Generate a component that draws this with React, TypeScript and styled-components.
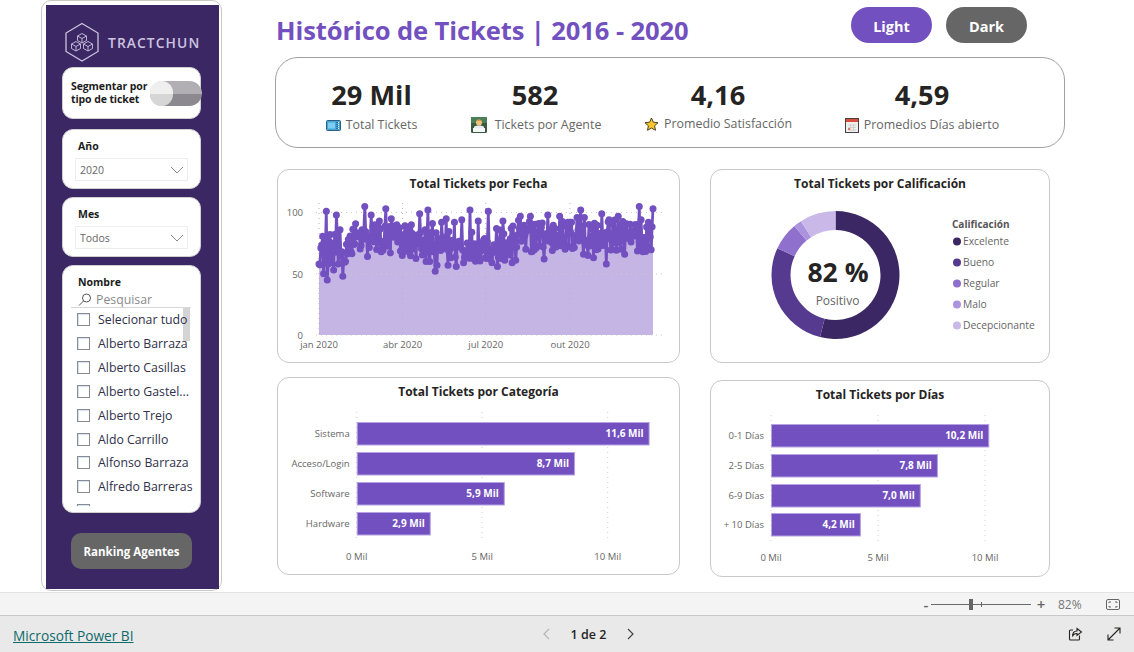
import React from "react";
import styled, { createGlobalStyle } from "styled-components";

const Global = createGlobalStyle`
  html, body { margin: 0; padding: 0; background: #fff; overflow: hidden; }
  body { font-family: "Open Sans", "Noto Sans", "Liberation Sans", sans-serif; }
  * { box-sizing: border-box; }
`;

const Page = styled.div`
  width: 1134px;
  height: 652px;
  display: flex;
  flex-direction: column;
`;
const Canvas = styled.div`
  height: 592px;
  display: flex;
  padding-left: 41px;
  background: #fff;
`;
const SideFrame = styled.aside`
  width: 181px;
  height: 591px;
  border: 1px solid #c8c8c8;
  border-radius: 10px;
  padding: 4px 2px 0 4px;
  background: #fff;
`;
const SideInner = styled.div`
  height: 584px;
  background: #3b2763;
  padding: 17px 18px 0 16px;
  display: flex;
  flex-direction: column;
`;
const Logo = styled.div`
  display: flex;
  align-items: center;
  gap: 8px;
  height: 39px;
  margin-left: 2px;
  margin-bottom: 6px;
`;
const LogoText = styled.span`
  color: #cdc3e0;
  font-size: 13.8px;
  font-weight: 600;
  letter-spacing: 1.1px;
  white-space: nowrap;
  margin-top: 1px;
`;
const SideCard = styled.div<{ $h: number; $mb: number }>`
  height: ${(p) => p.$h}px;
  margin-bottom: ${(p) => p.$mb}px;
  width: 139px;
  background: #fff;
  border: 1px solid #cfcfcf;
  border-radius: 11px;
  overflow: hidden;
`;
const ToggleCard = styled(SideCard)`
  display: flex;
  align-items: center;
  padding-left: 8px;
  overflow: visible;
  position: relative;
`;
const ToggleLabel = styled.div`
  font-size: 10.5px;
  font-weight: 700;
  line-height: 13.5px;
  color: #1c1c1c;
  white-space: nowrap;
  letter-spacing: -0.1px;
`;
const Toggle = styled.div`
  position: absolute;
  left: 87px;
  top: 13px;
  width: 52px;
  height: 25px;
  border-radius: 13px;
  background: linear-gradient(#b1afb4 0 50%, #8c8a90 50% 100%);
`;
const Knob = styled.div`
  width: 23px;
  height: 25px;
  border-radius: 13px;
  background: linear-gradient(#efefef 0 50%, #d6d6d6 50% 100%);
`;
const DropCard = styled(SideCard)`
  padding: 9px 12px 0 12px;
`;
const SlicerTitle = styled.div`
  font-size: 10.5px;
  font-weight: 700;
  line-height: 14px;
  color: #1c1c1c;
  margin-left: 3px;
`;
const Select = styled.div`
  height: 23px;
  margin-top: 5px;
  border: 1px solid #eeeeee;
  display: flex;
  align-items: center;
  justify-content: space-between;
  padding: 0 2px 0 4px;
  font-size: 10.5px;
  color: #666;
`;
const ListCard = styled(SideCard)`
  padding: 9px 0 0 15px;
`;
const ListTitle = styled(SlicerTitle)`
  margin-left: 0;
`;
const Search = styled.div`
  display: flex;
  align-items: flex-end;
  gap: 4px;
  height: 19px;
  margin-left: -7px;
  padding-left: 7px;
  width: 120px;
  border-bottom: 1px solid #d8d8d8;
  color: #8a8a8a;
  font-size: 12.3px;
  line-height: 15px;
`;
const ListArea = styled.div`
  position: relative;
  height: 198px;
  margin-left: -1px;
  overflow: hidden;
`;
const ScrollThumb = styled.div`
  position: absolute;
  left: 106px;
  top: 0;
  width: 7px;
  height: 33px;
  background: #d4d4d4;
`;
const Row = styled.div`
  position: relative;
  display: flex;
  align-items: center;
  gap: 8px;
  height: 23.85px;
  font-size: 12.3px;
  color: #30304a;
  white-space: nowrap;
`;
const Check = styled.span`
  width: 13px;
  height: 13px;
  flex: none;
  border: 1px solid #8a8a8a;
  box-shadow: inset 1px 1px 0 #cfe6fa;
  background: #fff;
`;
const Rank = styled.div`
  width: 121px;
  height: 36px;
  margin: 20px 0 0 9px;
  background: #666;
  border-radius: 10px;
  color: #fff;
  font-size: 11.5px;
  font-weight: 700;
  display: flex;
  align-items: center;
  justify-content: center;
  white-space: nowrap;
`;

const Main = styled.main`
  width: 790px;
  margin-left: 53px;
  display: flex;
  flex-direction: column;
`;
const Header = styled.header`
  height: 57px;
  display: flex;
  align-items: flex-start;
`;
const Title = styled.h1`
  margin: 13px 0 0 1px;
  width: 574px;
  font-size: 25.55px;
  line-height: 34px;
  font-weight: 700;
  color: #7350c0;
  white-space: nowrap;
  letter-spacing: -0.1px;
`;
const Mode = styled.div<{ $bg: string; $first?: boolean }>`
  width: 81px;
  height: 36px;
  margin: 7px 14px 0 ${(p) => (p.$first ? 1 : 0)}px;
  padding-top: 3px;
  border-radius: 18px;
  background: ${(p) => p.$bg};
  color: #fff;
  font-size: 14.5px;
  font-weight: 700;
  display: flex;
  align-items: center;
  justify-content: center;
`;
const Kpis = styled.section`
  height: 91px;
  border: 1px solid #a0a0a0;
  border-radius: 23px;
  display: grid;
  grid-template-columns: 191px 136px 230px 178px;
`;
const Kpi = styled.div<{ $labelTop: number }>`
  display: flex;
  flex-direction: column;
  align-items: center;
  padding-top: 19px;
  > div:last-child {
    margin-top: ${(p) => p.$labelTop}px;
  }
`;
const KpiValue = styled.div`
  font-size: 27.2px;
  line-height: 36px;
  font-weight: 700;
  color: #252423;
`;
const KpiLabel = styled.div<{ $gap?: number; $pl?: number }>`
  display: flex;
  align-items: center;
  gap: ${(p) => p.$gap ?? 5}px;
  padding-left: ${(p) => p.$pl ?? 0}px;
  font-size: 12.4px;
  line-height: 16px;
  color: #666;
  white-space: nowrap;
`;
const Charts = styled.div`
  display: flex;
  margin-top: 21px;
  margin-left: 2px;
  gap: 30px;
`;
const Col = styled.div<{ $w: number; $gap: number }>`
  width: ${(p) => p.$w}px;
  display: flex;
  flex-direction: column;
  gap: ${(p) => p.$gap}px;
`;
const Card = styled.div<{ $h: number }>`
  height: ${(p) => p.$h}px;
  border: 1px solid #c8c8c8;
  border-radius: 12px;
  background: #fff;
  overflow: hidden;
`;
const CardTitle = styled.div`
  height: 27px;
  padding-top: 6px;
  text-align: center;
  font-size: 12px;
  line-height: 16px;
  font-weight: 700;
  color: #252423;
  white-space: nowrap;
`;
const Plot = styled.svg`
  display: block;
  text {
    font-family: "Open Sans", "Noto Sans", sans-serif;
  }
`;

const ZoomBar = styled.div`
  height: 24px;
  background: #f4f4f4;
  border-top: 1px solid #e4e4e4;
  border-bottom: 1px solid #c9c9c9;
  display: flex;
  align-items: center;
  padding-left: 921px;
  color: #666;
`;
const Pm = styled.span`
  font-size: 15px;
  font-weight: 600;
  width: 10px;
  text-align: center;
`;
const Slider = styled.div`
  position: relative;
  width: 100px;
  height: 1px;
  background: #6a6a6a;
  margin: 0 5px 0 0;
`;
const Thumb = styled.div`
  position: absolute;
  left: 38px;
  top: -5px;
  width: 4px;
  height: 11px;
  background: #666;
`;
const Tick = styled.div`
  position: absolute;
  left: 50px;
  top: -2px;
  width: 1px;
  height: 5px;
  background: #666;
`;
const Pct = styled.span`
  font-size: 12px;
  color: #777;
  margin-left: 12px;
  width: 48px;
`;
const Footer = styled.footer`
  height: 36px;
  background: #e9e9e9;
  display: grid;
  grid-template-columns: 529px 93px 1fr;
  align-items: center;
  padding-left: 13px;
`;
const PbiLink = styled.a`
  font-size: 13.7px;
  padding-top: 2px;
  color: #0e6b6b;
  text-decoration: underline;
  white-space: nowrap;
`;
const Pager = styled.div`
  display: flex;
  align-items: center;
  justify-content: space-between;
  font-size: 12.5px;
  font-weight: 600;
  color: #252423;
`;
const FootIcons = styled.div`
  display: flex;
  justify-content: flex-end;
  gap: 24px;
  padding-right: 13px;
`;

const Hexagon = () => (
  <svg width="36" height="40" viewBox="0 0 36 40" fill="none" stroke="#cdc3e0">
    <path d="M18 1.500 34 11v18.500L18 39 2 29.500V11z" strokeWidth="1.300" />
    <g strokeWidth="0.900">
      <path d="M18 11.500l4.500 2.500v4.500L18 21l-4.500-2.500V14zM13.500 14l4.500 2.500 4.500-2.500M18 16.500V21" />
      <path d="M12 19.500l4.500 2.500v4.500L12 29l-4.500-2.500V22zM7.500 22l4.500 2.500 4.500-2.500M12 24.500V29" />
      <path d="M24 19.500l4.500 2.500v4.500L24 29l-4.500-2.500V22zM19.500 22l4.500 2.500 4.500-2.500M24 24.500V29" />
    </g>
  </svg>
);
const Chevron = () => (
  <svg width="16" height="10" viewBox="0 0 16 10" fill="none" stroke="#8a8a8a">
    <path d="M2 2l6 6 6-6" />
  </svg>
);
const Magnifier = () => (
  <svg width="14" height="14" viewBox="0 0 14 14" fill="none" stroke="#555" strokeWidth="1">
    <circle cx="8.500" cy="5" r="4" />
    <path d="M5.500 8L1 12.500" />
  </svg>
);
const TicketIcon = () => (
  <svg width="15" height="11" viewBox="0 0 15 11">
    <rect x="0.500" y="0.500" width="14" height="10" rx="1" fill="#45a5d8" stroke="#2d5f80" />
    <rect x="2" y="2.500" width="7" height="6" fill="#7fcdf0" />
    <path d="M11 2v7" stroke="#16384f" strokeDasharray="1 1" />
    <path d="M12.500 2v7" stroke="#e8f4fb" strokeDasharray="1 1" />
  </svg>
);
const AgentIcon = () => (
  <svg width="16" height="16" viewBox="0 0 16 16">
    <rect width="16" height="16" rx="1.500" fill="#3c5a40" />
    <rect y="0" width="16" height="6" fill="#4d8058" />
    <circle cx="8" cy="5.500" r="3" fill="#f3c27a" />
    <path d="M5 4.500C5 2 11 2 11 4.500L10 3.500H6z" fill="#b8742a" />
    <path d="M3 10c1-2 9-2 10 0v3H3z" fill="#e9edf0" />
    <rect x="2" y="11" width="12" height="4" fill="#f4f6f8" />
  </svg>
);
const StarIcon = () => (
  <svg width="15" height="15" viewBox="0 0 15 15">
    <path
      d="M7.500 1l1.900 4.200 4.600.5-3.400 3.100.9 4.500-4-2.300-4 2.300.9-4.500L1 5.700l4.600-.5z"
      fill="#f9c52f"
      stroke="#3a3010"
      strokeWidth="0.900"
      strokeLinejoin="round"
    />
  </svg>
);
const CalendarIcon = () => (
  <svg width="14" height="15" viewBox="0 0 14 15">
    <rect x="0.500" y="0.500" width="13" height="14" fill="#f1efee" stroke="#444" />
    <rect x="1" y="1" width="12" height="3" fill="#dd4b3a" />
    <path d="M3 7h8M3 9.500h8M3 12h8M5.500 6v7M8.500 6v7" stroke="#d5d0ce" />
    <rect x="3" y="10" width="2" height="2" fill="#dd7a6c" />
  </svg>
);
const ShareIcon = () => (
  <svg width="15" height="15" viewBox="0 0 15 15" fill="none" stroke="#252423" strokeWidth="1.100">
    <path d="M5 3H2.500A1 1 0 0 0 1.500 4v8a1 1 0 0 0 1 1h8a1 1 0 0 0 1-1V8.500" />
    <path d="M9 1.500l4.500 3.500L9 8.500V6.500c-2.500 0-4 1-4.500 3 0-3.500 1.500-5.500 4.500-5.500z" />
  </svg>
);
const ExpandIcon = () => (
  <svg width="14" height="14" viewBox="0 0 14 14" fill="none" stroke="#252423" strokeWidth="1.100">
    <path d="M1 13L13 1M7.500 1H13v5.500M1 7.500V13h5.500" />
  </svg>
);
const FitIcon = () => (
  <svg width="14" height="11" viewBox="0 0 14 11" fill="none" stroke="#666">
    <rect x="0.500" y="0.500" width="13" height="10" rx="1.500" />
    <path d="M3 4V3h2M9 3h2v1M3 7v1h2M9 8h2V7" />
  </svg>
);
const Pag = ({ dir, color }: { dir: "l" | "r"; color: string }) => (
  <svg width="8" height="12" viewBox="0 0 8 12" fill="none" stroke={color} strokeWidth="1.200">
    <path d={dir === "l" ? "M7 1L2 6l5 5" : "M1 1l5 5-5 5"} />
  </svg>
);

/* ---------- line chart ---------- */
const highs: [number, number][] = [
  [153, 101], [183, 98], [195, 86], [268, 105], [288, 98], [312, 93], [332, 103], [350, 95], [408, 90],
  [435, 99], [458, 102], [472, 91], [500, 92], [513, 95], [538, 92], [560, 94], [585, 102], [610, 93],
  [640, 101], [665, 87], [683, 93], [715, 89], [735, 97], [766, 97], [790, 91], [818, 98], [853, 97],
  [878, 92], [905, 96], [916, 102], [928, 96], [955, 94], [980, 99], [1003, 94], [1030, 97], [1048, 98],
  [1078, 90], [1092, 105], [1098, 94], [1120, 92], [1133, 103],
];
const lows: [number, number][] = [
  [128, 68], [133, 58], [145, 50], [158, 45], [175, 53], [190, 58], [203, 48], [212, 60], [228, 68],
  [258, 73], [277, 64], [318, 68], [346, 67], [382, 65], [403, 68], [448, 68], [465, 60], [480, 52],
  [487, 57], [520, 57], [543, 56], [565, 59], [580, 70], [612, 65], [650, 59], [667, 56], [690, 61],
  [710, 59], [722, 61], [752, 70], [768, 68], [807, 62], [832, 69], [870, 70], [925, 66], [940, 65],
  [955, 63], [985, 73], [995, 58], [1010, 70], [1037, 70], [1050, 66], [1068, 76], [1103, 68], [1125, 80],
];
const makeSeries = () => {
  let s = 12345;
  const rnd = () => {
    s = (s * 1664525 + 1013904223) % 4294967296;
    return s / 4294967296;
  };
  const vals: number[] = [];
  for (let d = 0; d < 366; d++) {
    const base = d < 30 ? 70 : d < 100 ? 79 : d < 210 ? 73 : 81;
    vals.push(base + (rnd() - 0.5) * 26);
  }
  [...highs, ...lows].forEach(([zx, v]) => {
    const d = Math.max(0, Math.min(365, Math.round(((zx - 132) / 1002) * 365)));
    vals[d] = v;
  });
  return vals;
};
const series = makeSeries();
const px = (d: number) => 319 + (d * 334) / 365;
const py = (v: number) => 335 - v * 1.225;

const LineChart = () => {
  const pts = series.map((v, d) => `${px(d).toFixed(1)},${py(v).toFixed(1)}`);
  const axisX: [string, number][] = [["jan 2020", 319], ["abr 2020", 402.5], ["jul 2020", 485.7], ["out 2020", 570]];
  const axisY: [string, number][] = [["100", 212.5], ["50", 274], ["0", 335]];
  return (
    <Plot width="402" height="165" viewBox="278 197 402 165">
      <polygon points={`319,335 ${pts.join(" ")} 653,335`} fill="#c5b5e5" />
      {axisY.map(([t, y]) => (
        <g key={t}>
          <line x1="316" x2="662" y1={y} y2={y} stroke="#c9c9c9" strokeDasharray="1 4" />
          <text x="303" y={y + 3.500} textAnchor="end" fontSize="9.500" fill="#666">{t}</text>
        </g>
      ))}
      {axisX.map(([t, x]) => (
        <g key={t}>
          <line x1={x} x2={x} y1="203" y2="335" stroke="#b9b2cc" strokeDasharray="1 4" />
          <text x={x} y="348" textAnchor="middle" fontSize="9.500" fill="#666">{t}</text>
        </g>
      ))}
      <polyline points={pts.join(" ")} fill="none" stroke="#7350c0" strokeWidth="2.800" strokeLinejoin="round" />
      {series.map((v, d) => (
        <circle key={d} cx={px(d)} cy={py(v)} r="3.500" fill="#7350c0" />
      ))}
    </Plot>
  );
};

/* ---------- bar charts ---------- */
type Bar = { label: string; value: number; text: string; y: number };
const catBars: Bar[] = [
  { label: "Sistema", value: 11.67, text: "11,6 Mil", y: 422 },
  { label: "Acceso/Login", value: 8.7, text: "8,7 Mil", y: 452 },
  { label: "Software", value: 5.9, text: "5,9 Mil", y: 482 },
  { label: "Hardware", value: 2.95, text: "2,9 Mil", y: 512 },
];
const dayBars: Bar[] = [
  { label: "0-1 Días", value: 10.2, text: "10,2 Mil", y: 424 },
  { label: "2-5 Días", value: 7.8, text: "7,8 Mil", y: 454 },
  { label: "6-9 Días", value: 7.0, text: "7,0 Mil", y: 484 },
  { label: "+ 10 Días", value: 4.2, text: "4,2 Mil", y: 513 },
];
const BarChart = ({
  vb, w, h, x0, scale, bars, axisY, top, bottom,
}: {
  vb: string; w: number; h: number; x0: number; scale: number; bars: Bar[]; axisY: number; top: number; bottom: number;
}) => (
  <Plot width={w} height={h} viewBox={vb}>
    {[0, 5, 10].map((m) => (
      <g key={m}>
        <line x1={x0 + m * scale} x2={x0 + m * scale} y1={top} y2={bottom} stroke="#d0d0d0" strokeDasharray="1 4" />
        <text x={x0 + m * scale} y={axisY} textAnchor="middle" fontSize="9.500" fill="#666">{m} Mil</text>
      </g>
    ))}
    {bars.map((b) => (
      <g key={b.label}>
        <text x={x0 - 7} y={b.y + 15} textAnchor="end" fontSize="9.500" fill="#666">{b.label}</text>
        <rect x={x0 + 0.500} y={b.y + 0.500} width={b.value * scale - 1} height="22.500" fill="#7350c0" stroke="#b5a3e2" />
        <text x={x0 + b.value * scale - 6} y={b.y + 15} textAnchor="end" fontSize="10" fontWeight="700" fill="#fff">{b.text}</text>
      </g>
    ))}
  </Plot>
);

/* ---------- donut ---------- */
const segs: [number, number, string][] = [
  [0, 194, "#3b2763"],
  [194, 294.7, "#553a90"],
  [294.7, 320, "#8f70cc"],
  [320, 327.3, "#ac93dd"],
  [327.3, 360, "#c9b8e8"],
];
const legend: [string, string, number][] = [
  ["Excelente", "#3b2763", 241],
  ["Bueno", "#553a90", 262],
  ["Regular", "#8f70cc", 283],
  ["Malo", "#ac93dd", 304],
  ["Decepcionante", "#c9b8e8", 325],
];
const arc = (a0: number, a1: number) => {
  const cx = 835.5, cy = 275, R = 64, r = 45;
  const p = (rad: number, a: number) => {
    const t = (a * Math.PI) / 180;
    return `${(cx + rad * Math.sin(t)).toFixed(2)} ${(cy - rad * Math.cos(t)).toFixed(2)}`;
  };
  const large = a1 - a0 > 180 ? 1 : 0;
  return `M${p(R, a0)}A${R} ${R} 0 ${large} 1 ${p(R, a1)}L${p(r, a1)}A${r} ${r} 0 ${large} 0 ${p(r, a0)}Z`;
};
const Donut = () => (
  <Plot width="338" height="165" viewBox="711 197 338 165">
    {segs.map(([a, b, c]) => (
      <path key={c} d={arc(a, b)} fill={c} />
    ))}
    <text x="838" y="282" textAnchor="middle" fontSize="26.500" fontWeight="700" fill="#252423">82 %</text>
    <text x="837.500" y="305" textAnchor="middle" fontSize="12" fill="#666">Positivo</text>
    <text x="952" y="228" fontSize="10" fontWeight="700" fill="#555">Calificación</text>
    {legend.map(([t, c, y]) => (
      <g key={t}>
        <circle cx="957" cy={y + 0.500} r="4" fill={c} />
        <text x="963" y={y + 4} fontSize="10.300" fill="#666">{t}</text>
      </g>
    ))}
  </Plot>
);

const names = [
  "Selecionar tudo", "Alberto Barraza", "Alberto Casillas", "Alberto Gastel...", "Alberto Trejo",
  "Aldo Carrillo", "Alfonso Barraza", "Alfredo Barreras",
];

export default function App() {
  return (
    <Page>
      <Global />
      <Canvas>
        <SideFrame>
          <SideInner>
            <Logo>
              <Hexagon />
              <LogoText>TRACTCHUN</LogoText>
            </Logo>
            <ToggleCard $h={52} $mb={10}>
              <ToggleLabel>Segmentar por<br />tipo de ticket</ToggleLabel>
              <Toggle><Knob /></Toggle>
            </ToggleCard>
            <DropCard $h={60} $mb={8}>
              <SlicerTitle>Año</SlicerTitle>
              <Select>2020<Chevron /></Select>
            </DropCard>
            <DropCard $h={60} $mb={8}>
              <SlicerTitle>Mes</SlicerTitle>
              <Select>Todos<Chevron /></Select>
            </DropCard>
            <ListCard $h={248} $mb={0}>
              <ListTitle>Nombre</ListTitle>
              <Search><Magnifier />Pesquisar</Search>
              <ListArea>
                <ScrollThumb />
                {names.map((n) => (
                  <Row key={n}><Check />{n}</Row>
                ))}
                <Row><Check /></Row>
              </ListArea>
            </ListCard>
            <Rank>Ranking Agentes</Rank>
          </SideInner>
        </SideFrame>
        <Main>
          <Header>
            <Title>Histórico de Tickets | 2016 - 2020</Title>
            <Mode $bg="#7350c0" $first>Light</Mode>
            <Mode $bg="#666666">Dark</Mode>
          </Header>
          <Kpis>
            <Kpi $labelTop={4}>
              <KpiValue>29 Mil</KpiValue>
              <KpiLabel><TicketIcon />Total Tickets</KpiLabel>
            </Kpi>
            <Kpi $labelTop={4}>
              <KpiValue>582</KpiValue>
              <KpiLabel $gap={8} $pl={2}><AgentIcon />Tickets por Agente</KpiLabel>
            </Kpi>
            <Kpi $labelTop={3}>
              <KpiValue>4,16</KpiValue>
              <KpiLabel><StarIcon />Promedio Satisfacción</KpiLabel>
            </Kpi>
            <Kpi $labelTop={4}>
              <KpiValue>4,59</KpiValue>
              <KpiLabel><CalendarIcon />Promedios Días abierto</KpiLabel>
            </Kpi>
          </Kpis>
          <Charts>
            <Col $w={403} $gap={14}>
              <Card $h={194}>
                <CardTitle>Total Tickets por Fecha</CardTitle>
                <LineChart />
              </Card>
              <Card $h={198}>
                <CardTitle>Total Tickets por Categoría</CardTitle>
                <BarChart vb="278 405 402 168" w={402} h={168} x0={356.7} scale={25.1} bars={catBars} axisY={560} top={412} bottom={540} />
              </Card>
            </Col>
            <Col $w={340} $gap={17}>
              <Card $h={194}>
                <CardTitle>Total Tickets por Calificación</CardTitle>
                <Donut />
              </Card>
              <Card $h={197}>
                <CardTitle>Total Tickets por Días</CardTitle>
                <BarChart vb="711 408 338 167" w={338} h={167} x0={771} scale={21.4} bars={dayBars} axisY={561} top={415} bottom={542} />
              </Card>
            </Col>
          </Charts>
        </Main>
      </Canvas>
      <ZoomBar>
        <Pm>-</Pm>
        <Slider><Thumb /><Tick /></Slider>
        <Pm>+</Pm>
        <Pct>82%</Pct>
        <FitIcon />
      </ZoomBar>
      <Footer>
        <PbiLink href="#">Microsoft Power BI</PbiLink>
        <Pager>
          <Pag dir="l" color="#b5b5b5" />
          1 de 2
          <Pag dir="r" color="#444" />
        </Pager>
        <FootIcons><ShareIcon /><ExpandIcon /></FootIcons>
      </Footer>
    </Page>
  );
}
